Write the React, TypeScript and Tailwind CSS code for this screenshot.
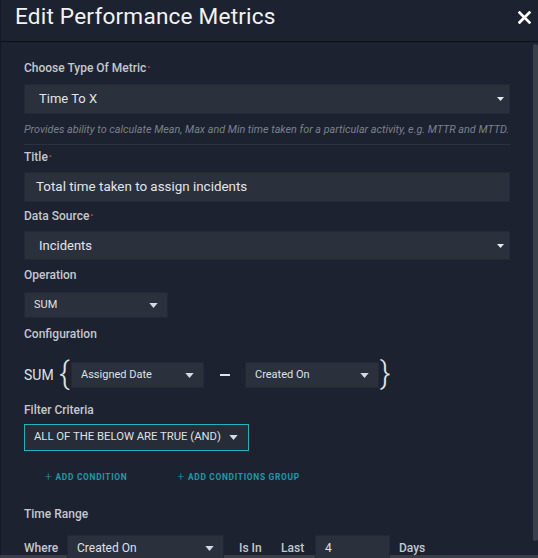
import React from "react";

/* ─── Small pieces ─────────────────────────────────────────────────────── */
function Caret({ className = "" }: { className?: string }) {
  return (
    <svg viewBox="0 0 10 6" className={className} fill="currentColor">
      <path d="M0 0h10L5 6z" />
    </svg>
  );
}

function Label({ text, required = false, className = "" }: { text: string; required?: boolean; className?: string }) {
  return (
    <div className={`h-[16px] leading-[16px] text-[12px] font-medium text-[#c4c8cf] ${className}`}>
      {text}
      {required && <span className="ml-[1px] text-[8px] align-top text-[#e03a3a]">•</span>}
    </div>
  );
}

function WideSelect({ value, className = "" }: { value: string; className?: string }) {
  return (
    <div
      className={`flex items-center justify-between bg-[#2a303c] border border-[#242a35] pl-[14px] pr-[5px] text-[13px] text-[#e2e5ea] ${className}`}
    >
      <span>{value}</span>
      <Caret className="w-[7px] h-[6px] text-[#e6e9ee]" />
    </div>
  );
}

function SmallSelect({ value, className = "" }: { value: string; className?: string }) {
  return (
    <div
      className={`flex items-center justify-between bg-[#2a303c] border border-[#232833] pl-[9px] pr-[9px] text-[11px] text-[#dfe2e7] ${className}`}
    >
      <span>{value}</span>
      <Caret className="w-[9px] h-[5px] text-[#d6dbe3]" />
    </div>
  );
}

/* ─── Dialog ───────────────────────────────────────────────────────────── */
export default function App() {
  return (
    <div
      className="relative w-[538px] h-[558px] overflow-hidden bg-[#3a3d43]"
      style={{ fontFamily: "Roboto, 'Noto Sans', sans-serif" }}
    >
      <div className="relative h-[555px] bg-[#1d2230] border-l border-[#141820] flex flex-col">
        {/* Header */}
        <div className="h-[42px] shrink-0 flex items-start justify-between pl-[14px] pr-[7px] pt-[3px] border-b border-[#0d1016]">
          <h1 className="text-[22.6px] leading-[28px] text-[#f1f3f6] tracking-[0.2px]">Edit Performance Metrics</h1>
          <button className="mt-[8px] text-white">
            <svg viewBox="0 0 12 12" className="w-[13px] h-[13px]" stroke="currentColor" strokeWidth="2.6" strokeLinecap="square">
              <path d="M1.5 1.5l9 9M10.5 1.5l-9 9" />
            </svg>
          </button>
        </div>

        {/* Body */}
        <div className="flex-1 pl-[23px] pr-[28px] pt-[18px]">
          <Label text="Choose Type Of Metric" required />
          <WideSelect value="Time To X" className="mt-[8px] h-[30px]" />
          <div className="mt-[9px] h-[14px] leading-[14px] text-[10.8px] italic text-[#7b818d] whitespace-nowrap">
            Provides ability to calculate Mean, Max and Min time taken for a particular activity, e.g. MTTR and MTTD.
          </div>
          <div className="mt-[7px] h-px bg-[#2b3140]" />

          <Label text="Title" required className="mt-[4px]" />
          <div className="mt-[7px] h-[30px] flex items-center bg-[#2a303c] border border-[#242a35] pl-[11px] text-[13.4px] text-[#e2e5ea]">
            Total time taken to assign incidents
          </div>

          <Label text="Data Source" required className="mt-[6px]" />
          <WideSelect value="Incidents" className="mt-[7px] h-[29px]" />

          <Label text="Operation" className="mt-[7px]" />
          <SmallSelect value="SUM" className="mt-[9px] h-[26px] w-[144px]" />

          <Label text="Configuration" className="mt-[8px]" />
          <div className="mt-[20px] h-[26px] flex items-center text-[#dfe2e7]">
            <span className="text-[14px] w-[35px]">SUM</span>
            <span className="text-[32px] font-light leading-none -mt-[4px] w-[12px]">{"{"}</span>
            <SmallSelect value="Assigned Date" className="h-[26px] w-[133px]" />
            <span className="w-[41px] flex justify-center">
              <span className="block w-[10px] h-[2px] bg-[#dfe2e7]" />
            </span>
            <SmallSelect value="Created On" className="h-[26px] w-[134px]" />
            <span className="text-[32px] font-light leading-none -mt-[4px] ml-[1px]">{"}"}</span>
          </div>

          <Label text="Filter Criteria" className="mt-[14px]" />
          <div className="mt-[6px] h-[27px] w-[225px] flex items-center gap-[8px] border border-[#1fb3c0] bg-[#262c38] pl-[9px] text-[11.3px] text-[#dfe2e7]">
            <span>ALL OF THE BELOW ARE TRUE (AND)</span>
            <Caret className="w-[9px] h-[5px] text-[#d6dbe3]" />
          </div>

          <div className="mt-[19px] h-[14px] flex items-center text-[8.4px] font-bold tracking-[0.7px] text-[#1d9ca9]">
            <span className="ml-[21px] flex items-center">
              <span className="text-[12px] font-light mr-[3px] leading-none">+</span>ADD CONDITION
            </span>
            <span className="ml-[50px] flex items-center">
              <span className="text-[12px] font-light mr-[3px] leading-none">+</span>ADD CONDITIONS GROUP
            </span>
          </div>

          <Label text="Time Range" className="mt-[22px]" />
          <div className="mt-[13px] h-[26px] flex items-center text-[12px] font-medium text-[#c4c8cf]">
            <span className="w-[43px]">Where</span>
            <SmallSelect value="Created On" className="h-[26px] w-[157px] !text-[12px] font-normal" />
            <span className="ml-[15px] w-[42px]">Is In</span>
            <span className="w-[34px]">Last</span>
            <div className="h-[26px] w-[75px] flex items-center bg-[#2a303c] border border-[#232833] pl-[9px] text-[12px] font-normal text-[#dfe2e7]">
              4
            </div>
            <span className="ml-[9px]">Days</span>
          </div>
        </div>

        {/* Scrollbar thumb */}
        <div className="absolute right-0 top-[44px] h-[497px] w-[5px] rounded-l-[2px] rounded-r-[3px] bg-[#3a404b]" />
      </div>
    </div>
  );
}
